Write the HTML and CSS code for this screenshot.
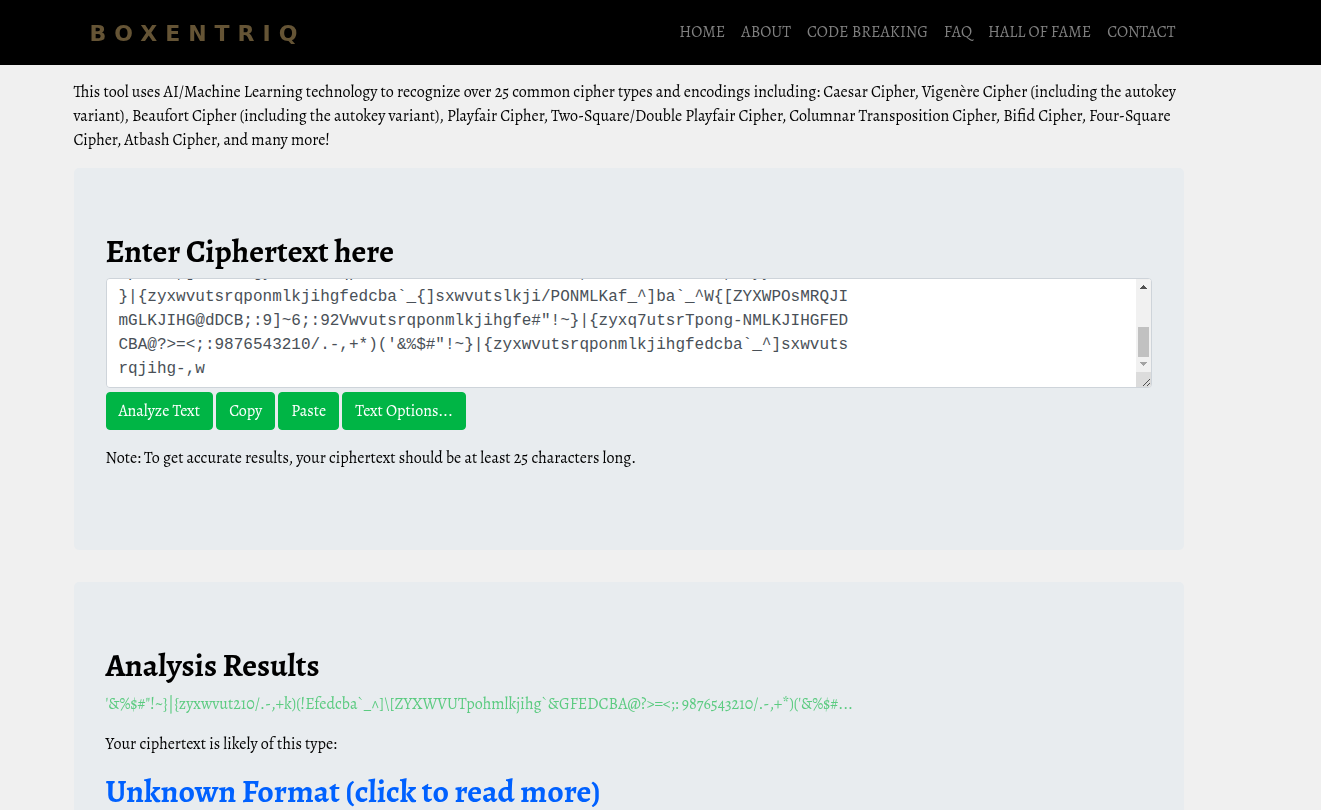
FILE: index.html
```html
<!DOCTYPE html>
<html lang="en">
<head>
<meta charset="utf-8">
<title>Cipher Identifier | Boxentriq</title>
<link rel="stylesheet" href="styles.css">
</head>
<body>
<header class="site-header">
  <div class="container navbar">
    <a class="brand" href="#">BOXENTRIQ</a>
    <nav class="nav" aria-label="Main">
      <a href="#">HOME</a>
      <a href="#">ABOUT</a>
      <a href="#">CODE BREAKING</a>
      <a href="#">FAQ</a>
      <a href="#">HALL OF FAME</a>
      <a href="#">CONTACT</a>
    </nav>
  </div>
</header>
<main class="site-main">
  <div class="container">
    <p class="intro">This tool uses AI/Machine Learning technology to recognize over 25 common cipher types and encodings including: Caesar Cipher, Vigenère Cipher (including the autokey variant), Beaufort Cipher (including the autokey variant), Playfair Cipher, Two-Square/Double Playfair Cipher, Columnar Transposition Cipher, Bifid Cipher, Four-Square Cipher, Atbash Cipher, and many more!</p>
    <section class="panel">
      <h2><label for="ciphertext">Enter Ciphertext here</label></h2>
      <div class="cipher-box">
        <textarea id="ciphertext" class="cipher-input" rows="4" spellcheck="false">'&amp;%$#"!~}|{zyxwvut210/.-,+k)(!Efedcba`_^]\[ZYXWVUTpohmlkjihg`&amp;GFEDCBA@?&gt;=
&lt;;:9876543210/.-,+*)('&amp;%$#"!~}|{zyxwvutsrqponmlkjihgfedcba`_^]\[ZYXWVUTSRQP
ONMLKJIHGFEDCBA@?&gt;=&lt;;:9876543210/.-,+*)('&amp;%$#"!~}|{zyxwvutsrqponmlkjihgfedcb
a`_^]\[ZYXWVUTSRQPONMLKJIHGFEDCBA@?&gt;=&lt;;:9876543210/.-,+*)('&amp;%$#"!~}|{zyxwvut
~pmnkl,]sxwvutgyxwvutsrqpnmlkihfedcba`^XWVUTSRON,+*876543210/.-,+*yyonmlkihf
}|{zyxwvutsrqponmlkjihgfedcba`_{]sxwvutslkji/PONMLKaf_^]ba`_^W{[ZYXWPOsMRQJI
mGLKJIHG@dDCB;:9]~6;:92Vwvutsrqponmlkjihgfe#"!~}|{zyxq7utsrTpong-NMLKJIHGFED
CBA@?&gt;=&lt;;:9876543210/.-,+*)('&amp;%$#"!~}|{zyxwvutsrqponmlkjihgfedcba`_^]sxwvuts
rqjihg-,w</textarea>
        <div class="scrollbar" aria-hidden="true">
          <svg class="scroll-arrow" viewBox="0 0 15 15" shape-rendering="crispEdges"><path d="M7 6h1v1h1v1h1v1h1v1H4V9h1V8h1V7h1z" fill="#505050"/></svg>
          <div class="scroll-track"><div class="scroll-thumb"></div></div>
          <svg class="scroll-arrow" viewBox="0 0 15 15" shape-rendering="crispEdges"><path d="M4 5h7v1h-1v1H9v1H8v1H7V8H6V7H5V6H4z" fill="#a3a3a3"/></svg>
          <svg class="scroll-arrow resizer" viewBox="0 0 15 15"><path d="M7 14l7-7M11 14l3-3" stroke="#505050" fill="none"/></svg>
        </div>
      </div>
      <div class="actions">
        <button type="button">Analyze Text</button>
        <button type="button">Copy</button>
        <button type="button">Paste</button>
        <button type="button">Text Options...</button>
      </div>
      <p>Note: To get accurate results, your ciphertext should be at least 25 characters long.</p>
    </section>
    <section class="panel">
      <h2>Analysis Results</h2>
      <p class="excerpt">'&amp;%$#"!~}|{zyxwvut210/.-,+k)(!Efedcba`_^]\[ZYXWVUTpohmlkjihg`&amp;GFEDCBA@?&gt;=&lt;;: 9876543210/.-,+*)('&amp;%$#...</p>
      <p>Your ciphertext is likely of this type:</p>
      <h2><a class="result-link" href="#">Unknown Format (click to read more)</a></h2>
    </section>
  </div>
</main>
<script src="script.js"></script>
</body>
</html>
```

FILE: script.js
```js
const input = document.getElementById('ciphertext');
input.scrollTop = input.scrollHeight;
```

FILE: styles.css
```css
* { box-sizing: border-box; }

body {
  margin: 0;
  background: #f0f0f0;
  color: #000;
  font: 16px/24px Alegreya, "Liberation Serif", serif;
}

/* Both bands leave a side gutter at the right of the window. */
.site-header,
.site-main { padding-right: 64px; }

.site-header { background: #000; }

.container {
  max-width: 1140px;
  margin: 0 auto;
  padding: 0 15px;
  will-change: opacity;
}

.navbar {
  display: flex;
  align-items: flex-start;
  justify-content: space-between;
  padding-top: 20px;
  padding-bottom: 19px;
}

.brand {
  padding: 2px 0 0 16px;
  color: #655435;
  font: 700 22px/24px "DejaVu Sans", sans-serif;
  letter-spacing: 8px;
  text-decoration: none;
}

.nav {
  display: flex;
  gap: 16px;
  padding-right: 8px;
}
.nav a {
  color: #808080;
  text-decoration: none;
}

p { margin: 0 0 16px; }
.intro { padding-top: 15px; }

.panel {
  padding: 64px 32px;
  margin-bottom: 32px;
  border-radius: 5px;
  background: #e8ecef;
}

h2 {
  margin: 0 0 8px;
  font-size: 32px;
  line-height: 38px;
  font-weight: 700;
}

.cipher-box { position: relative; }

.cipher-input {
  display: block;
  width: 100%;
  height: 110px;
  padding: 6px 27px 6px 12px;
  border: 1px solid #ced4da;
  border-radius: 4px;
  background: #fff;
  color: #495057;
  font: 16px/24px "Liberation Mono", monospace;
  overflow-y: scroll;
  scrollbar-width: none;
  resize: none;
}

/* Scrollbar laid over the right edge of the text box. */
.scrollbar {
  position: absolute;
  top: 1px;
  right: 1px;
  bottom: 1px;
  width: 15px;
  display: flex;
  flex-direction: column;
  border-radius: 0 3px 3px 0;
  background: #f1f1f1;
  overflow: hidden;
  pointer-events: none;
}
.scroll-arrow {
  display: block;
  flex: none;
  width: 15px;
  height: 15px;
}
.scroll-track {
  flex: 1;
  display: flex;
  flex-direction: column;
  justify-content: flex-end;
  padding: 0 2px;
}
.scroll-thumb {
  height: 30px;
  background: #c1c1c1;
}
.resizer { background: #dcdcdc; }

.actions { margin: 4px 0 16px; }
.actions button {
  padding: 6px 12px;
  border: 1px solid #00b545;
  border-radius: 4px;
  background: #00b545;
  color: #fff;
  font: inherit;
  vertical-align: middle;
  cursor: pointer;
}

.excerpt { color: #5bcb80; }
.result-link {
  color: #0061ff;
  text-decoration: none;
}
```
